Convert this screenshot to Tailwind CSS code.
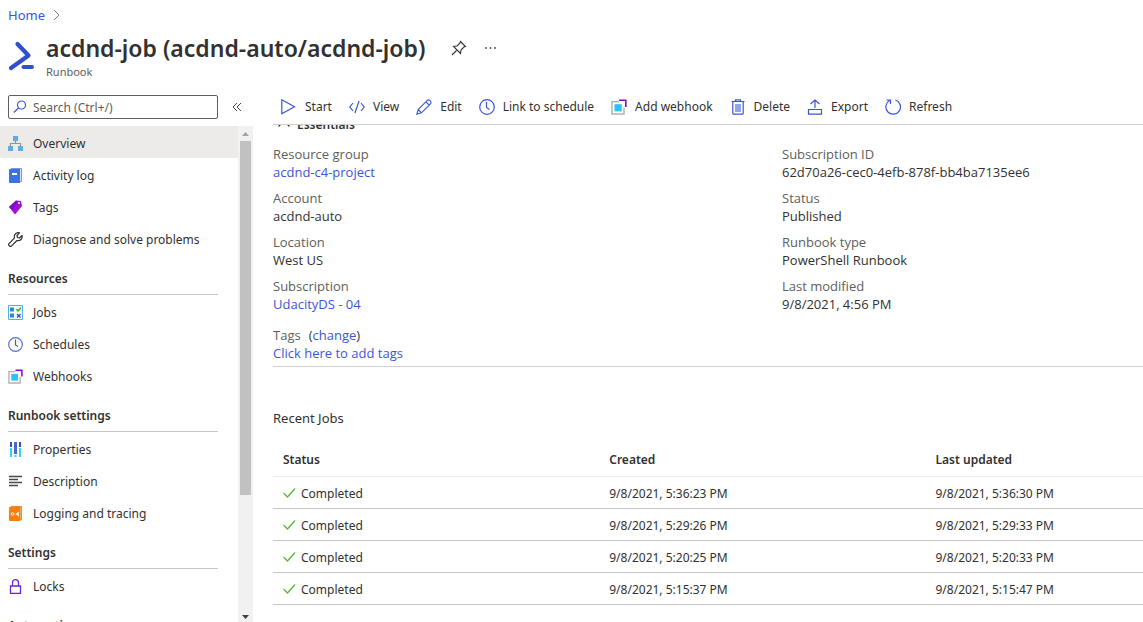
<!DOCTYPE html>
<html lang="en">
<head>
<meta charset="utf-8">
<title>acdnd-job (acdnd-auto/acdnd-job)</title>
<script src="https://cdn.jsdelivr.net/npm/@tailwindcss/browser@4"></script>
</head>
<body class="flex h-screen flex-col overflow-hidden bg-white font-['Noto_Sans',sans-serif] text-xs leading-[19px] text-[#323130]">
<svg class="hidden">
  <symbol id="webhook" viewBox="0 0 16 16"><path d="M8 2.800H1v12.200h12V8.500" fill="none" stroke="#b3b3b3" stroke-width="1.500"/><path d="M3.500 5.200h7.200v7.200H3.500z" fill="#28c4f5"/><path d="M8 1.200h6.800v6.800" fill="none" stroke="#9200d6" stroke-width="1.600"/></symbol>
  <symbol id="check" viewBox="0 0 14 14"><path d="M.5 7l4 4L12 2.500" fill="none" stroke="#57b82f" stroke-width="1.200"/></symbol>
</svg>

<header class="shrink-0 px-2 pt-1.5">
  <nav aria-label="Breadcrumb" class="flex items-center gap-2 text-[13px] leading-[18px]">
    <a href="#" class="text-[#3b55da]">Home</a>
    <svg class="h-3 w-2" viewBox="0 0 8 12" fill="none" stroke="#8a8886"><path d="M1 1l5 5-5 5"/></svg>
  </nav>
  <div class="mt-2 flex gap-3">
    <svg class="mt-2 h-8 w-[26px]" viewBox="0 0 26 32" fill="none" stroke="#304fcc" stroke-linecap="round"><path d="M9.500 4L20.500 15.500 3 28" stroke-width="4.200" stroke-linejoin="round"/><path d="M15.500 27H24" stroke-width="4"/></svg>
    <div>
      <div class="flex items-center">
        <h1 class="text-[23px] leading-8 font-semibold">acdnd-job (acdnd-auto/acdnd-job)</h1>
        <button aria-label="Pin" class="ml-[26px]"><svg class="size-4" viewBox="0 0 16 16" fill="none" stroke="#323130" stroke-width="1.100"><path d="M9.500 1.500l5 5-1.500.5-3 3-.5 3.500-7-7 3.500-.5 3-3zM5.500 10.500L1 15"/></svg></button>
        <button aria-label="More" class="ml-4"><svg class="size-4" viewBox="0 0 16 16" fill="#484644"><circle cx="3" cy="8" r=".9"/><circle cx="7.500" cy="8" r=".9"/><circle cx="12" cy="8" r=".9"/></svg></button>
      </div>
      <p class="text-[11px] leading-4 text-[#605e5c]">Runbook</p>
    </div>
  </div>
</header>

<div class="flex min-h-0 flex-1 pt-[7px]">
  <aside class="flex w-[253px] shrink-0 flex-col pt-2">
    <div class="mb-[7px] flex shrink-0 items-center pl-2">
      <label class="flex h-6 w-[210px] items-center gap-1.5 rounded-xs border border-[#605e5c] px-1">
        <svg class="size-3.5 shrink-0" viewBox="0 0 14 14" fill="none" stroke="#3b55da" stroke-width="1.200"><circle cx="8.500" cy="5" r="4"/><path d="M5.500 8L.8 12.500"/></svg>
        <input type="text" aria-label="Search" placeholder="Search (Ctrl+/)" class="w-full min-w-0 outline-none placeholder:text-[#605e5c]">
      </label>
      <button aria-label="Collapse menu" class="ml-3.5"><svg class="h-3 w-3" viewBox="0 0 12 12" fill="none" stroke="#484644"><path d="M5 2L1 6l4 4M9 2L5 6l4 4"/></svg></button>
    </div>
    <div class="flex min-h-0 flex-1">
      <nav aria-label="Runbook menu" class="min-w-0 flex-1 overflow-hidden">
        <div class="pb-px">
          <a href="#" class="flex h-8 items-center gap-2.5 bg-[#edebe9] px-2 pt-0.5"><svg class="size-[15px]" viewBox="0 0 15 15"><path d="M7.500 5v3M2.500 11V7.500h10V11" fill="none" stroke="#949494" stroke-width="1.200"/><path d="M5 0h5v5H5zM0 10h5v5H0zM10 10h5v5h-5z" fill="#59b0dd"/></svg>Overview</a>
          <a href="#" class="flex h-8 items-center gap-2.5 px-2 pt-0.5"><svg class="size-[15px]" viewBox="0 0 15 15"><path d="M3 .5h10.500v13H3z" fill="#dfe5f8" stroke="#7f95e0"/><path d="M2 1h10v14H2q-1 0-1-1V2q0-1 1-1z" fill="#3973e5"/><path d="M4 5h5v2H4z" fill="#fff"/></svg>Activity log</a>
          <a href="#" class="flex h-8 items-center gap-2.5 px-2 pt-0.5"><svg class="size-[15px]" viewBox="0 0 15 15"><path d="M1 7L8 .5l5 .5 1 5-7 8.500z" fill="#9b12d3"/><path d="M1 7L8 .5l2 1L4 9.500z" fill="#7f10c8"/><circle cx="11" cy="3" r="1" fill="#fff"/></svg>Tags</a>
          <a href="#" class="flex h-8 items-center gap-2.5 px-2 pt-0.5"><svg class="size-[15px]" viewBox="0 0 15 15" fill="none" stroke="#323130" stroke-width="1.200" stroke-linejoin="round"><path d="M11.500.8a4 4 0 0 0-5 5L.8 11.800q-.5 1 .5 2t2 .4L9 8.500a4 4 0 0 0 5-5L11.500 6 9.500 5.500 9 3.500z"/></svg>Diagnose and solve problems</a>
        </div>

        <h2 class="mr-5 mb-px ml-2 border-b border-[#c8c6c4] pt-3.5 pb-1.5 font-semibold">Resources</h2>
        <a href="#" class="flex h-8 items-center gap-2.5 px-2"><svg class="size-[15px]" viewBox="0 0 15 15"><path d="M.5.5h14v14H.5z" fill="#f4fbff" stroke="#59b0dd"/><path d="M2 2.500h4v4H2zM2 8.500h4v4H2z" fill="#3587c7"/><path d="M8.500 4l1.500 2 3-3.500" fill="none" stroke="#49b512" stroke-width="1.500"/><path d="M9 9l3.500 3.500M12.500 9L9 12.500" stroke="#3048c0" stroke-width="1.200"/></svg>Jobs</a>
        <a href="#" class="flex h-8 items-center gap-2.5 px-2"><svg class="size-[15px]" viewBox="0 0 15 15" fill="none"><circle cx="7.500" cy="7.500" r="6.800" stroke="#5570df" stroke-width="1.200"/><path d="M7.500 2.500v5.500l2.500 1.500" stroke="#605e5c" stroke-width="1.200"/></svg>Schedules</a>
        <a href="#" class="flex h-8 items-center gap-2.5 px-2"><svg class="size-[15px]"><use href="#webhook"/></svg>Webhooks</a>

        <h2 class="mr-5 mb-px ml-2 border-b border-[#c8c6c4] pt-3.5 pb-1.5 font-semibold">Runbook settings</h2>
        <a href="#" class="flex h-8 items-center gap-2.5 px-2"><svg class="size-[15px]" viewBox="0 0 15 15"><path d="M2 6h2v9H2zM11 6h2v9h-2zM6.500 13h2v2h-2z" fill="#32d4f5"/><path d="M2 0h2v5H2zM11 0h2v5h-2z" fill="#304fcc"/><path d="M6 0h3v12H6z" fill="#4c66da"/></svg>Properties</a>
        <a href="#" class="flex h-8 items-center gap-2.5 px-2"><svg class="size-[15px]" viewBox="0 0 15 15" stroke="#4a4a4a" stroke-width="1.300"><path d="M1 2.500h13M1 5.500h9M1 8.500h13M1 11.500h9"/></svg>Description</a>
        <a href="#" class="flex h-8 items-center gap-2.5 px-2"><svg class="size-[15px]" viewBox="0 0 15 15"><path d="M3 .5h10.500v13H3z" fill="#f8d4af" stroke="#e88b35"/><path d="M2 1h10.500v14H2q-1 0-1-1V2q0-1 1-1z" fill="#f7800c"/><circle cx="4.500" cy="8" r="1.300" fill="none" stroke="#fff"/><path d="M6.500 8h1M8 8l2.500-2v4z" fill="#fff" stroke="#fff" stroke-width=".6"/></svg>Logging and tracing</a>

        <h2 class="mr-5 mb-px ml-2 border-b border-[#c8c6c4] pt-3.5 pb-1.5 font-semibold">Settings</h2>
        <a href="#" class="flex h-8 items-center gap-2.5 px-2"><svg class="size-[15px]" viewBox="0 0 15 15" fill="none" stroke="#6228d8" stroke-width="1.300"><path d="M2.500 7h10v7.300h-10zM4.500 7V4q0-3.300 3-3.300t3 3.300v3"/></svg>Locks</a>

        <h2 class="mr-5 mb-px ml-2 border-b border-[#c8c6c4] pt-3.5 pb-1.5 font-semibold">Automation</h2>
      </nav>
      <div aria-hidden="true" class="flex w-[15px] shrink-0 flex-col items-center bg-[#f1f1f1]">
        <svg class="h-[15px] w-[15px] shrink-0" viewBox="0 0 15 15"><path d="M4 10h7L7.500 6z" fill="#a3a3a3"/></svg>
        <div class="w-[11px] flex-[355] bg-[#c1c1c1]"></div>
        <div class="flex-[115]"></div>
        <svg class="h-3 w-[15px] shrink-0" viewBox="0 0 15 12"><path d="M4 5h7L7.500 9z" fill="#404040"/></svg>
      </div>
    </div>
  </aside>

  <main class="flex min-w-0 flex-1 flex-col pl-5">
    <div role="toolbar" aria-label="Runbook actions" class="flex h-[38px] shrink-0 items-center gap-[17px] border-b border-[#d2d0ce] pt-0.5 pl-2 whitespace-nowrap">
      <button class="flex items-center gap-2"><svg class="size-4" viewBox="0 0 16 16" fill="none" stroke="#3b55da" stroke-width="1.200"><path d="M.8.8v14L13.500 7.800z"/></svg>Start</button>
      <button class="flex items-center gap-2"><svg class="size-4" viewBox="0 0 16 16" fill="none" stroke="#3b55da" stroke-width="1.200"><path d="M4 4L.8 8 4 12M12 4l3.200 4L12 12M10 2L6 14"/></svg>View</button>
      <button class="flex items-center gap-2"><svg class="size-4" viewBox="0 0 16 16" fill="none" stroke="#3b55da" stroke-width="1.100"><path d="M.8 15.200l1.400-4.700L11.500 1.200q1-.8 2.500.5t.8 2.800L5.500 13.800zM2.200 10.500l3.300 3.300M10 2.800l3.200 3.200"/></svg>Edit</button>
      <button class="flex items-center gap-2"><svg class="size-4" viewBox="0 0 16 16" fill="none" stroke="#3b55da" stroke-width="1.200"><circle cx="8" cy="8" r="7.300"/><path d="M7.500 3v5.500l3 2"/></svg>Link to schedule</button>
      <button class="flex items-center gap-2"><svg class="size-4"><use href="#webhook"/></svg>Add webhook</button>
      <button class="flex items-center gap-2"><svg class="size-4" viewBox="0 0 16 16" fill="none" stroke="#3b55da" stroke-width="1.200"><path d="M1.500 2.500h13M5.500 2.500V.8h5v1.700M2.800 2.500v11.700q0 1 1 1h8.400q1 0 1-1V2.500"/><path d="M5 5h6v8H5z" fill="#93a3ea" stroke="none"/></svg>Delete</button>
      <button class="flex items-center gap-2"><svg class="size-4" viewBox="0 0 16 16" fill="none" stroke="#3b55da" stroke-width="1.200"><path d="M1.500 10.500h13v4.700h-13zM8 9V1M3.500 5L8 1l4.500 4"/></svg>Export</button>
      <button class="flex items-center gap-2"><svg class="size-4" viewBox="0 0 16 16" fill="none" stroke="#3b55da" stroke-width="1.200"><path d="M10.500 1a7.300 7.300 0 1 1-6 .6M1.500 1h4v4"/></svg>Refresh</button>
    </div>

    <div class="min-h-0 flex-1 overflow-hidden">
      <button class="-mt-[9px] flex items-center gap-1 pl-1 leading-[18px] font-semibold"><svg class="size-4" viewBox="0 0 16 16" fill="none" stroke="#323130" stroke-width="1.200"><path d="M1.500 9.500L7 4l5.500 5.500"/></svg>Essentials</button>
      <section aria-label="Essentials" class="mt-[11px] border-b border-[#d2d0ce] pb-1 font-['Open_Sans',sans-serif] text-[13px] leading-[18px]">
        <div class="grid grid-cols-[509fr_361fr]">
          <dl class="grid gap-2">
            <div><dt class="text-[#605e5c]">Resource group</dt><dd><a href="#" class="text-[#3b55da]">acdnd-c4-project</a></dd></div>
            <div><dt class="text-[#605e5c]">Account</dt><dd>acdnd-auto</dd></div>
            <div><dt class="text-[#605e5c]">Location</dt><dd>West US</dd></div>
            <div><dt class="text-[#605e5c]">Subscription</dt><dd><a href="#" class="text-[#3b55da]">UdacityDS - 04</a></dd></div>
          </dl>
          <dl class="grid gap-2">
            <div><dt class="text-[#605e5c]">Subscription ID</dt><dd>62d70a26-cec0-4efb-878f-bb4ba7135ee6</dd></div>
            <div><dt class="text-[#605e5c]">Status</dt><dd>Published</dd></div>
            <div><dt class="text-[#605e5c]">Runbook type</dt><dd>PowerShell Runbook</dd></div>
            <div><dt class="text-[#605e5c]">Last modified</dt><dd>9/8/2021, 4:56 PM</dd></div>
          </dl>
        </div>
        <p class="mt-[13px]"><span class="mr-2 text-[#605e5c]">Tags</span>(<a href="#" class="text-[#3b55da]">change</a>)</p>
        <p><a href="#" class="text-[#3b55da]">Click here to add tags</a></p>
      </section>

      <h2 class="mt-[42px] text-[13px] leading-[18px]">Recent Jobs</h2>
      <table class="mt-4 w-full table-fixed border-collapse text-left">
        <thead>
          <tr class="h-[33px] border-b border-[#edebe9]"><th class="w-3/8 px-2.5 font-semibold">Status</th><th class="w-3/8 px-2.5 font-semibold">Created</th><th class="w-1/4 px-2.5 font-semibold">Last updated</th></tr>
        </thead>
        <tbody>
          <tr class="h-8 border-b border-[#c8c6c4]"><td class="px-2.5 pt-0.5"><span class="flex items-center gap-1"><svg class="size-3.5"><use href="#check"/></svg>Completed</span></td><td class="px-2.5 pt-0.5">9/8/2021, 5:36:23 PM</td><td class="px-2.5 pt-0.5">9/8/2021, 5:36:30 PM</td></tr>
          <tr class="h-8 border-b border-[#c8c6c4]"><td class="px-2.5 pt-0.5"><span class="flex items-center gap-1"><svg class="size-3.5"><use href="#check"/></svg>Completed</span></td><td class="px-2.5 pt-0.5">9/8/2021, 5:29:26 PM</td><td class="px-2.5 pt-0.5">9/8/2021, 5:29:33 PM</td></tr>
          <tr class="h-8 border-b border-[#c8c6c4]"><td class="px-2.5 pt-0.5"><span class="flex items-center gap-1"><svg class="size-3.5"><use href="#check"/></svg>Completed</span></td><td class="px-2.5 pt-0.5">9/8/2021, 5:20:25 PM</td><td class="px-2.5 pt-0.5">9/8/2021, 5:20:33 PM</td></tr>
          <tr class="h-8 border-b border-[#c8c6c4]"><td class="px-2.5 pt-0.5"><span class="flex items-center gap-1"><svg class="size-3.5"><use href="#check"/></svg>Completed</span></td><td class="px-2.5 pt-0.5">9/8/2021, 5:15:37 PM</td><td class="px-2.5 pt-0.5">9/8/2021, 5:15:47 PM</td></tr>
        </tbody>
      </table>
    </div>
  </main>
</div>
</body>
</html>
